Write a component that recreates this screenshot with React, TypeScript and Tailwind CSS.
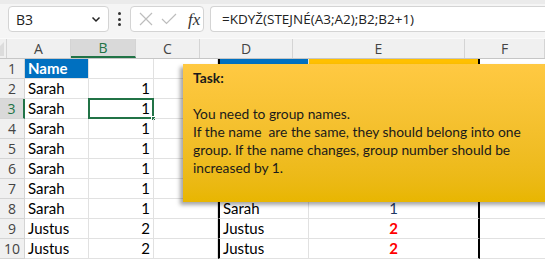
import React from "react";

const cols = [
  { w: 64 },
  { w: 65 },
  { w: 64 },
  { w: 93 },
  { w: 172 },
  { w: 80 },
];
const letters = ["A", "B", "C", "D", "E", "F"];

type Cell = { text?: string; align?: "l" | "r" | "c"; cls?: string };

const rows: Cell[][] = [
  [
    { text: "Name", cls: "bg-[#0070c0] text-white font-bold" },
    {},
    {},
    { cls: "bg-[#0070c0]" },
    { cls: "bg-[#ffc000]" },
    {},
  ],
  ...Array.from({ length: 7 }, (_, i) => [
    { text: "Sarah" },
    { text: "1", align: "r" as const },
    {},
    i === 6 ? { text: "Sarah" } : {},
    i === 6 ? { text: "1", align: "c" as const, cls: "text-[#1f3864]" } : {},
    {},
  ]),
  ...Array.from({ length: 2 }, () => [
    { text: "Justus" },
    { text: "2", align: "r" as const },
    {},
    { text: "Justus" },
    { text: "2", align: "c" as const, cls: "text-[#ff0000] font-bold" },
    {},
  ]),
];

export default function App() {
  const font = { fontFamily: "Lato, 'Noto Sans', sans-serif" };
  return (
    <div className="w-[545px] h-[259px] overflow-hidden bg-white relative select-none">
      {/* formula bar */}
      <div className="h-[38px] bg-[#f5f5f5] border-t-[4px] border-[#ebebeb] flex items-start pt-[2px] pl-[8px] gap-0">
        <div
          className="w-[101px] h-[26px] bg-white border border-[#d4d4d4] rounded-[4px] flex items-center justify-between pl-[7px] pr-[7px] text-[14px] text-[#222]"
          style={{ fontFamily: "'Open Sans', sans-serif" }}
        >
          <span>B3</span>
          <svg width="10" height="7" viewBox="0 0 10 7">
            <path d="M1.5 1.5 L5 5 L8.5 1.5" stroke="#222" strokeWidth="1.5" fill="none" />
          </svg>
        </div>
        <div className="w-[21px] h-[26px] flex flex-col items-center justify-center gap-[2.5px]">
          <div className="w-[3px] h-[3px] rounded-full bg-[#333]" />
          <div className="w-[3px] h-[3px] rounded-full bg-[#333]" />
          <div className="w-[3px] h-[3px] rounded-full bg-[#333]" />
        </div>
        <div className="w-[74px] h-[26px] bg-white border border-[#d4d4d4] rounded-[4px] flex items-center pl-[8px] gap-[8px]">
          <svg width="14" height="14" viewBox="0 0 14 14">
            <path d="M1 1 L13 13 M13 1 L1 13" stroke="#bdbdbd" strokeWidth="1.2" fill="none" />
          </svg>
          <svg width="16" height="12" viewBox="0 0 16 12">
            <path d="M1 6 L5.5 10.5 L15 1" stroke="#bdbdbd" strokeWidth="1.2" fill="none" />
          </svg>
          <span
            className="text-[17px] italic text-[#333] leading-none ml-[3px]"
            style={{ fontFamily: "'Liberation Serif', serif" }}
          >
            fx
          </span>
        </div>
        <div
          className="ml-[6px] flex-1 h-[26px] bg-white border border-[#d4d4d4] border-r-0 rounded-l-[4px] flex items-center pl-[11px] text-[13.5px] text-[#222]"
          style={{ fontFamily: "'Open Sans', sans-serif" }}
        >
          =KDYŽ(STEJNÉ(A3;A2);B2;B2+1)
        </div>
      </div>
      <div className="h-[1px] bg-[#fafafa]" />

      {/* grid */}
      <div className="flex flex-col" style={font}>
        {/* header row */}
        <div className="flex h-[20px] bg-[#f0f0f0] border-b border-[#c6c6c6] text-[14px] text-[#444]" style={{ fontFamily: "'Open Sans', sans-serif" }}>
          <div className="w-[25px] border-r border-[#d4d4d4] relative">
            <svg className="absolute right-[2px] bottom-[2px]" width="14" height="14" viewBox="0 0 14 14">
              <path d="M14 0 L14 14 L0 14 Z" fill="#dcdcdc" />
            </svg>
          </div>
          {cols.map((c, i) => (
            <div
              key={i}
              style={{ width: c.w }}
              className={`shrink-0 flex items-center justify-center border-r border-[#d4d4d4] leading-none ${
                i === 1 ? "bg-[#d9d9d9] text-[#217346] border-b-2 border-b-[#217346]" : ""
              }`}
            >
              {letters[i]}
            </div>
          ))}
        </div>
        {rows.map((r, ri) => (
          <div key={ri} className="flex h-[20px] text-[15px] text-black">
            <div
              className={`w-[25px] shrink-0 flex items-center justify-center border-r border-b text-[14px] text-[#444] ${
                ri === 2
                  ? "bg-[#d9d9d9] border-r-2 border-r-[#217346] border-b-[#d4d4d4] text-[#217346]"
                  : "bg-[#f0f0f0] border-[#d4d4d4]"
              }`}
              style={{ fontFamily: "'Open Sans', sans-serif" }}
            >
              {ri + 1}
            </div>
            {r.map((c, ci) => {
              const thickL = ci === 3 ? "border-l-2 border-l-black" : "";
              const thickR = ci === 4 ? "border-r-2 border-r-black" : "border-r border-r-[#e1e1e1]";
              const w = ci === 3 ? cols[ci].w - 2 : ci === 4 ? cols[ci].w - 1 : cols[ci].w;
              return (
                <div
                  key={ci}
                  style={{ width: w }}
                  className={`shrink-0 flex items-center px-[3px] leading-none border-b border-b-[#e1e1e1] ${thickR} ${thickL} ${
                    c.align === "r" ? "justify-end" : c.align === "c" ? "justify-center" : "justify-start"
                  } ${c.cls ?? ""} relative`}
                >
                  {c.text}
                  {ri === 2 && ci === 1 && (
                    <>
                      <div className="absolute left-[-1px] top-[-1px] right-[-1px] bottom-[-1px] border-2 border-[#217346] pointer-events-none" />
                      <div className="absolute right-[-3px] bottom-[-3px] w-[5px] h-[5px] bg-[#217346] border border-white" />
                    </>
                  )}
                </div>
              );
            })}
          </div>
        ))}
      </div>

      {/* callout */}
      <div
        className="absolute left-[183px] top-[64px] w-[380px] h-[138px] bg-gradient-to-b from-[#ffc942] to-[#e8b600] shadow-[-3px_3px_4px_rgba(0,0,0,0.35)] pl-[10px] pt-[5px] text-[13.8px] leading-[18px] text-[#1a1a1a]"
        style={font}
      >
        <div className="font-bold">Task:</div>
        <div>&nbsp;</div>
        <div>You need to group names.</div>
        <div>If the name&nbsp; are the same, they should belong into one</div>
        <div>group. If the name changes, group number should be</div>
        <div>increased by 1.</div>
      </div>
    </div>
  );
}
